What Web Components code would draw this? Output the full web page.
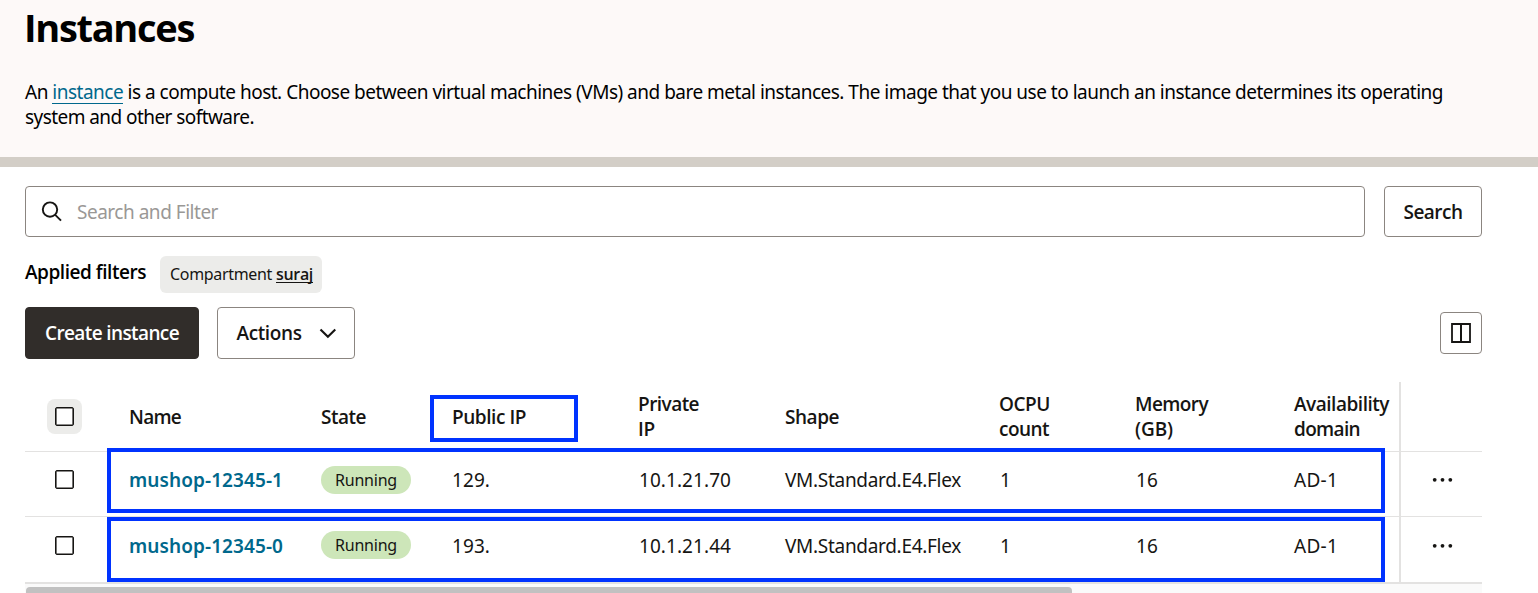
<!DOCTYPE html>
<html lang="en">
<head>
<meta charset="utf-8">
<title>Instances</title>
<style>
html,body{margin:0;background:#fff}
body{height:593px;overflow:hidden;font:19px/25px "Noto Sans","Open Sans",sans-serif;color:#161513;--strong:"Open Sans","Noto Sans",sans-serif}
</style>
</head>
<body>
<instances-page></instances-page>
<script>
const define = (name, html, setup) => {
  const t = document.createElement('template');
  t.innerHTML = html;
  customElements.define(name, class extends HTMLElement {
    connectedCallback() {
      if (this.shadowRoot) return;
      this.attachShadow({mode: 'open'}).append(t.content.cloneNode(true));
      if (setup) setup(this, this.shadowRoot);
    }
  });
};

define('page-header', `
<style>
:host{display:block;box-sizing:border-box;height:167px;padding:7px 25px 0;background:#fdf9f8;border-bottom:10px solid #d3cec7;color:#000}
h1{margin:0 0 0 -1px;font-family:var(--strong);font-size:38px;line-height:40px;font-weight:700}
p{margin:33px 0 0}
p fit-text{display:block}
a{color:#00688c;text-decoration:none;border-bottom:1px solid #00688c;display:inline-block;line-height:21px}
</style>
<h1><fit-text w="170">Instances</fit-text></h1>
<p><fit-text w="1418">An <a>instance</a> is a compute host. Choose between virtual machines (VMs) and bare metal instances. The image that you use to launch an instance determines its operating</fit-text>
<fit-text w="229">system and other software.</fit-text></p>`);

define('ui-button', `
<style>
:host{display:inline-flex;box-sizing:border-box;align-items:center;justify-content:center;height:52px;border:1px solid #8b8580;border-radius:4px;background:#fff;font-family:var(--strong);font-weight:600;color:#161513}
:host([primary]){background:#312d2a;border-color:#312d2a;color:#fff}
</style><slot></slot>`);

define('search-bar', `
<style>
:host{display:flex;gap:19px}
.field{box-sizing:border-box;display:flex;align-items:center;width:1340px;height:51px;border:1px solid #8b8580;border-radius:4px;padding-left:15px;gap:15px;color:#9a9896}
ui-button{width:98px;height:51px}
fit-text{padding-top:2px}
svg{display:block}
</style>
<div class="field"><svg width="21" height="21" viewBox="0 0 21 21" fill="none" stroke="#161513" stroke-width="1.9"><circle cx="9" cy="8.6" r="7.2"/><path d="M14.2 13.8L20 19.6"/></svg><fit-text w="141">Search and Filter</fit-text></div>
<ui-button><fit-text w="59">Search</fit-text></ui-button>`);

define('filter-chip', `
<style>
:host{display:flex;align-items:center;box-sizing:border-box;width:162px;height:37px;padding-left:10px;border-radius:6px;background:#ececea;font-size:16px;gap:4px}
b{font-family:var(--strong);font-weight:600;line-height:18px;border-bottom:1px solid #161513;height:17px;margin-top:-1px}
b fit-text{line-height:18px}
</style><fit-text w="102"><slot name="key"></slot></fit-text><b><fit-text w="37"><slot></slot></fit-text></b>`);

define('applied-filters', `
<style>
:host{display:flex;gap:14px;margin-top:19px;height:37px}
strong{font-family:var(--strong);font-weight:600;color:#000;margin-top:4px}
</style><strong><fit-text w="121">Applied filters</fit-text></strong><filter-chip><span slot="key">Compartment</span>suraj</filter-chip>`);

define('table-toolbar', `
<style>
:host{display:flex;align-items:center;margin-top:14px}
.create{width:174px}.actions{width:138px;margin-left:18px}
.actions svg{margin-left:17px}
.cols{width:42px;height:42px;margin-left:auto}
</style>
<ui-button class="create" primary><fit-text w="134">Create instance</fit-text></ui-button>
<ui-button class="actions"><fit-text w="65">Actions</fit-text><svg width="17" height="11" viewBox="0 0 17 11" fill="none" stroke="#161513" stroke-width="2.2"><path d="M1.5 1.5L8.9 8.7L16.3 1.5"/></svg></ui-button>
<ui-button class="cols"><svg width="20" height="20" viewBox="0 0 20 20" fill="none" stroke="#161513"><path d="M1 1H19V19H1Z" stroke-width="1.8"/><path d="M10 1V19" stroke-width="2"/></svg></ui-button>`);

define('check-box', `
<style>
:host{display:grid;place-items:center;width:35px;height:35px;border-radius:8px}
:host([hover]){background:#ececea}
i{box-sizing:border-box;width:19px;height:19px;border:1px solid #161513;border-radius:2px;background:#fff;box-shadow:inset 0 0 0 .6px #161513}
</style><i></i>`);

define('status-badge', `
<style>
:host{display:flex;align-items:center;justify-content:center;width:90px;height:28px;border-radius:14px;background:#cde6b9;font-size:16px}
</style><fit-text w="62"><slot></slot></fit-text>`);

const COLS = 'display:grid;grid-template-columns:104px 192px 131px 186px 147px 214px 136px 159px 105px 2px 81px;box-sizing:border-box;position:relative;border-bottom:1px solid #e3e2e1;';

define('table-head', `
<style>
:host{${COLS}height:70px;align-items:center;font-family:var(--strong);font-weight:600}
check-box{margin-left:22px;margin-top:-1px}
div{padding-top:1px}
fit-text{display:block}
.sep{align-self:stretch;margin-bottom:-1px;background:#e3e2e1}
.mark{position:absolute;box-sizing:border-box;left:405px;top:13px;width:148px;height:47px;border:4px solid #03f}
</style>
<check-box hover></check-box>
<div><fit-text w="52">Name</fit-text></div><div><fit-text w="45">State</fit-text></div><div><fit-text w="74">Public IP</fit-text></div>
<div><fit-text w="61">Private</fit-text><fit-text w="17">IP</fit-text></div><div><fit-text w="54">Shape</fit-text></div>
<div><fit-text w="51">OCPU</fit-text><fit-text w="50">count</fit-text></div><div><fit-text w="73">Memory</fit-text><fit-text w="38">(GB)</fit-text></div>
<div><fit-text w="95">Availability</fit-text><fit-text w="66">domain</fit-text></div><span class="sep"></span><span></span>
<div class="mark"></div>`);

define('instance-row', `
<style>
:host{${COLS}height:65px;align-items:start}
:host([last]){height:67px;border-bottom-width:2px}
div{margin-top:16px}
:host([last]) div{margin-top:17px}
check-box{margin:10px 0 0 22px}
:host([last]) check-box{margin-top:11px}
status-badge{margin-top:14px}
.name{font-weight:600;color:#00688c}
.sep{align-self:stretch;margin-bottom:-1px;background:#e3e2e1}
svg{margin:25px 0 0 30px}
:host([last]) svg{margin-top:26px}
.num{padding-left:1px}
.mark{position:absolute;box-sizing:border-box;left:82px;top:-4px;width:1278px;height:65px;border:4px solid #03f}
:host([last]) .mark{top:0}
</style>
<check-box></check-box>
<div class="name"><fit-text w="154"><slot name="name"></slot></fit-text></div>
<status-badge>Running</status-badge>
<div><fit-text w="38"><slot name="public"></slot></fit-text></div>
<div class="num"><fit-text w="92"><slot name="private"></slot></fit-text></div>
<div><fit-text w="176">VM.Standard.E4.Flex</fit-text></div>
<div class="num"><fit-text w="11">1</fit-text></div>
<div class="num"><fit-text w="22">16</fit-text></div>
<div><fit-text w="44">AD-1</fit-text></div>
<span class="sep"></span>
<svg width="22" height="6" viewBox="0 0 22 6" fill="#161513"><circle cx="3.7" cy="2.8" r="1.9"/><circle cx="11.5" cy="2.8" r="1.9"/><circle cx="19.3" cy="2.8" r="1.9"/></svg>
<section class="mark"></section>`);

define('instances-table', `
<style>
:host{display:block;margin-top:23px}
.track{height:9px;background:#fafafa;padding:3px 1px 0}
.thumb{width:1046px;height:9px;border-radius:4px;background:#c1c1c1}
</style>
<table-head></table-head>
<instance-row><span slot="name">mushop-12345-1</span><span slot="public">129.</span><span slot="private">10.1.21.70</span></instance-row>
<instance-row last><span slot="name">mushop-12345-0</span><span slot="public">193.</span><span slot="private">10.1.21.44</span></instance-row>
<div class="track"><div class="thumb"></div></div>`);

define('instances-page', `
<style>:host{display:block}main{padding:19px 56px 0 25px}</style>
<page-header></page-header>
<main><search-bar></search-bar><applied-filters></applied-filters><table-toolbar></table-toolbar><instances-table></instances-table></main>`);

/* Tracks its text so that the line occupies the width given in "w". */
define('fit-text', `<style>:host{display:inline-block;white-space:nowrap}span{display:inline-block}</style><span><slot></slot></span>`, (el, root) => {
  const span = root.querySelector('span');
  const text = n => n.assignedNodes ? n.assignedNodes({flatten: true}).map(text).join('')
    : n.nodeType === 3 ? n.data : [...n.childNodes].map(text).join('');
  const count = text(root.querySelector('slot')).trim().length;
  if (count) span.style.letterSpacing = (el.getAttribute('w') - span.getBoundingClientRect().width) / count + 'px';
});
</script>
</body>
</html>
